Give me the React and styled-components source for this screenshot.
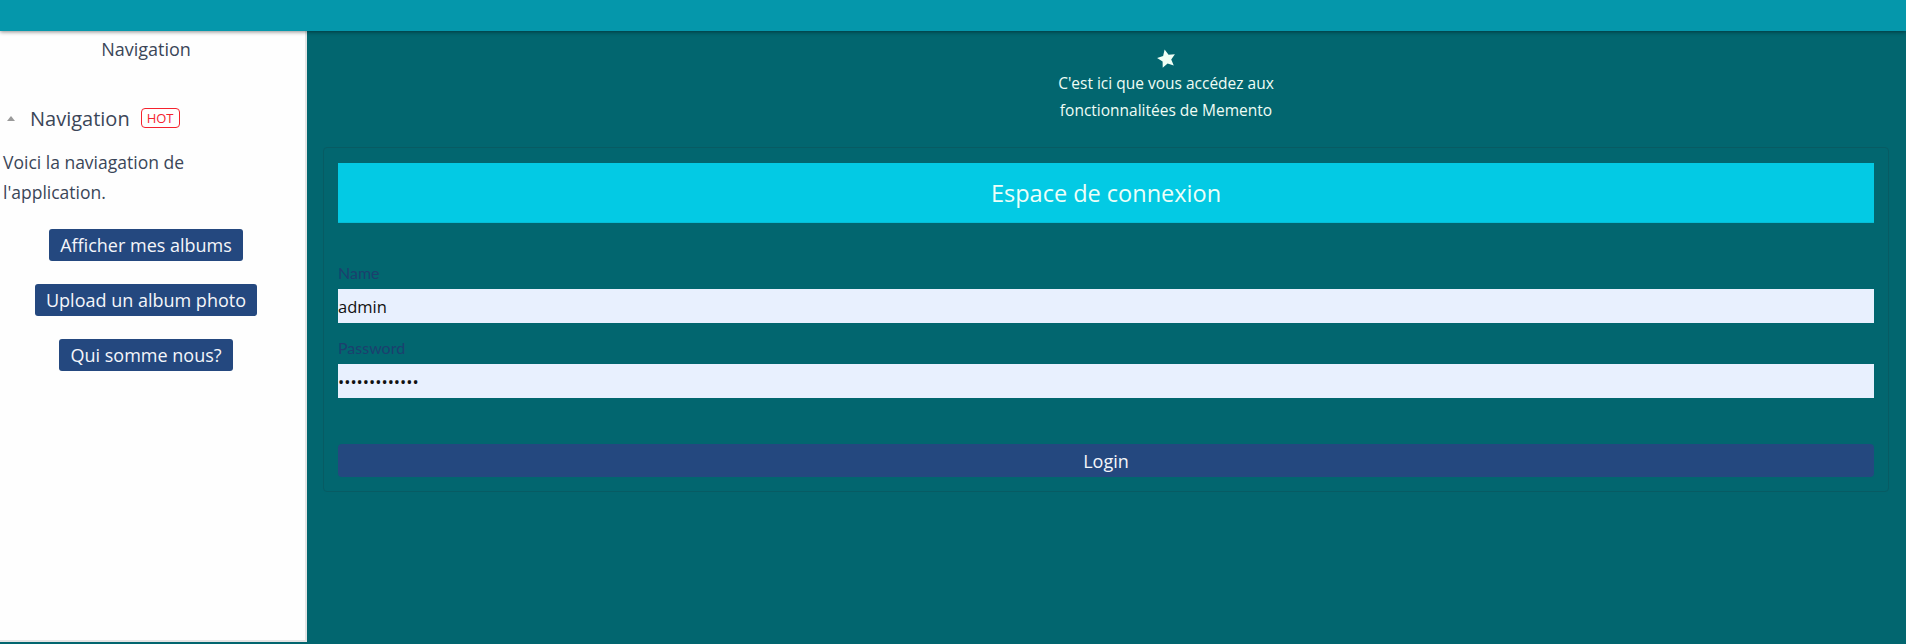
import React from "react";
import styled, { createGlobalStyle } from "styled-components";

const Global = createGlobalStyle`
  html, body { margin: 0; padding: 0; }
  body {
    background: #02666f;
    font-family: "Open Sans", "Noto Sans", sans-serif;
    height: 644px;
    overflow: hidden;
  }
  * { box-sizing: border-box; }
`;

const Page = styled.div`
  display: flex;
  flex-direction: column;
  height: 644px;
`;

const TopBar = styled.header`
  height: 31px;
  flex: none;
  background: #0597ab;
  box-shadow: 0 1px 4px rgba(0, 0, 0, 0.45);
  position: relative;
  z-index: 2;
`;

const Body = styled.div`
  display: flex;
  flex: 1;
  min-height: 0;
`;

const Sidebar = styled.aside`
  width: 307px;
  flex: none;
  height: 611px;
  background: #fefefe;
  border-right: 2px solid #e4e4e4;
  border-bottom: 2px solid #e4e4e4;
  padding: 0 16px 0 3px;
  color: #3b4658;
`;

const SideTitle = styled.div`
  text-align: center;
  font-size: 18px;
  line-height: 24px;
  padding-top: 6px;
  color: #3b4658;
`;

const AccordionHead = styled.div`
  display: flex;
  align-items: center;
  margin-top: 43px;
  height: 28px;
`;

const Caret = styled.span`
  width: 0;
  height: 0;
  border-left: 4.5px solid transparent;
  border-right: 4.5px solid transparent;
  border-bottom: 5px solid #9a9a9a;
  margin: 0 15px 0 4px;
`;

const HeadText = styled.span`
  font-size: 20px;
  color: #3b4658;
`;

const Hot = styled.span`
  margin-left: 11px;
  border: 1px solid #f5222d;
  color: #f5222d;
  border-radius: 4px;
  font-size: 13px;
  line-height: 18px;
  padding: 0 5px;
`;

const Para = styled.p`
  margin: 15px 0 0;
  font-size: 17.5px;
  line-height: 30px;
  color: #3b4658;
`;

const NavList = styled.div`
  display: flex;
  flex-direction: column;
  align-items: center;
  gap: 23px;
  margin-top: 22px;
`;

const NavButton = styled.button`
  height: 32px;
  padding: 0 11px;
  border: none;
  border-radius: 3px;
  background: #24487f;
  color: #f4f6fa;
  font-family: inherit;
  font-size: 18px;
  cursor: pointer;
`;

const Main = styled.main`
  flex: 1;
  padding: 0 17px 0 16px;
`;

const Intro = styled.div`
  display: flex;
  flex-direction: column;
  align-items: center;
  padding-left: 120px;
  padding-top: 16px;
  color: #effdf5;
  font-size: 15.5px;
  line-height: 27px;
  text-align: center;
`;

const Star = styled.svg`
  width: 23px;
  height: 23px;
`;

const Card = styled.section`
  margin-top: 23px;
  border: 1px solid #075b63;
  border-radius: 4px;
  padding: 15px 14px 14px;
`;

const CardHeader = styled.div`
  height: 60px;
  background: #03cae4;
  border-bottom: 1px solid #06bdd6;
  display: flex;
  align-items: center;
  justify-content: center;
  color: #ecfff9;
  font-size: 23.5px;
`;

const Form = styled.form`
  display: flex;
  flex-direction: column;
  padding-top: 38px;
`;

const Label = styled.label`
  font-family: Lato, sans-serif;
  font-size: 16px;
  line-height: 24px;
  color: #1c3f6e;
  margin-bottom: 4px;
`;

const Input = styled.input`
  height: 34px;
  border: none;
  background: #e8f0fe;
  padding: 0;
  font-family: inherit;
  font-size: 16.5px;
  color: #111;
  outline: none;
  margin-bottom: ${(p) => p.$mb || 0}px;
`;

const LoginButton = styled.button`
  margin-top: 46px;
  height: 33px;
  border: none;
  border-radius: 4px;
  background: #24487f;
  color: #f4f6fa;
  font-family: inherit;
  font-size: 18px;
`;

export default function App() {
  return (
    <>
      <Global />
      <Page>
        <TopBar />
        <Body>
          <Sidebar>
            <SideTitle>Navigation</SideTitle>
            <AccordionHead>
              <Caret />
              <HeadText>Navigation</HeadText>
              <Hot>HOT</Hot>
            </AccordionHead>
            <Para>
              Voici la naviagation de
              <br />
              l'application.
            </Para>
            <NavList>
              <NavButton>Afficher mes albums</NavButton>
              <NavButton>Upload un album photo</NavButton>
              <NavButton>Qui somme nous?</NavButton>
            </NavList>
          </Sidebar>
          <Main>
            <Intro>
              <Star viewBox="0 0 24 24">
                <path
                  fill="#f0fff5"
                  transform="rotate(-12 12 12)"
                  d="M12 2.5l2.9 6.2 6.6.8-4.9 4.6 1.3 6.6L12 17.4l-5.9 3.3 1.3-6.6-4.9-4.6 6.6-.8z"
                />
              </Star>
              <span>C'est ici que vous accédez aux</span>
              <span>fonctionnalitées de Memento</span>
            </Intro>
            <Card>
              <CardHeader>Espace de connexion</CardHeader>
              <Form onSubmit={(e) => e.preventDefault()}>
                <Label>Name</Label>
                <Input $mb={13} defaultValue="admin" />
                <Label>Password</Label>
                <Input type="password" defaultValue="administrator" />
                <LoginButton type="submit">Login</LoginButton>
              </Form>
            </Card>
          </Main>
        </Body>
      </Page>
    </>
  );
}
